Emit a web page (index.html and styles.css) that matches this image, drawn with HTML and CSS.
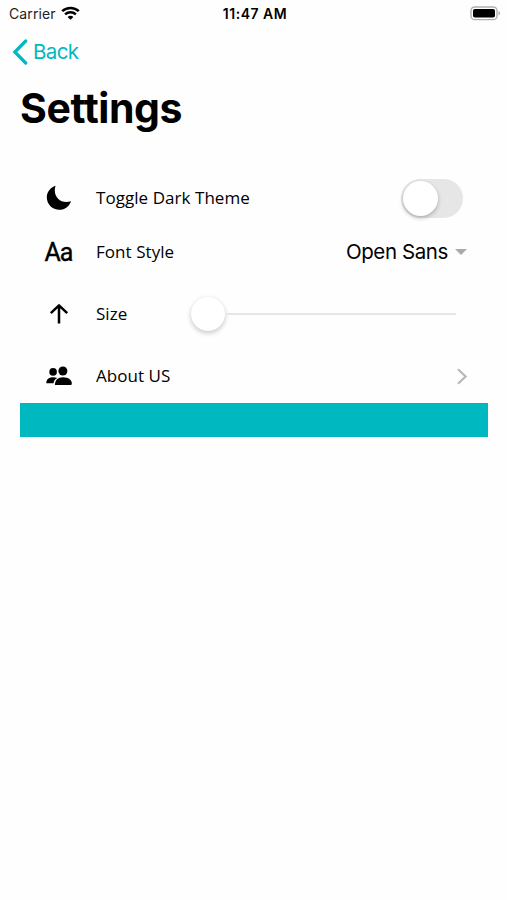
FILE: index.html
```html
<!DOCTYPE html>
<html lang="en">
<head>
    <meta charset="UTF-8">
    <meta name="viewport" content="width=device-width, initial-scale=1.0">
    <title>Settings</title>
    <link rel="stylesheet" href="styles.css">
</head>
<body>
    <div class="status-bar">
        <div class="carrier">
            <span>Carrier</span>
            <svg class="wifi" width="19" height="14" viewBox="0 0 19 14" fill="none" stroke="#000" stroke-width="2.5">
                <path d="M1.2 5.2C5.8 .8 13.2 .8 17.8 5.2"/>
                <path d="M4.1 8.4C7.1 5.6 11.9 5.6 14.9 8.4"/>
                <path d="M9.5 13.8L6.6 10.9C8.2 9.5 10.8 9.5 12.4 10.9Z" fill="#000" stroke="none"/>
            </svg>
        </div>
        <div class="time">11:47 AM</div>
        <div class="battery-wrap">
            <svg class="battery" width="31" height="15" viewBox="0 0 31 15">
                <rect x="1" y="1" width="26" height="12.6" rx="3.6" fill="#fff" stroke="#b0b0b0" stroke-width="1.4"/>
                <rect x="3" y="3" width="22" height="8.6" rx="1.8" fill="#000"/>
                <path d="M28.5 5.1C30.6 5.8 30.6 8.8 28.5 9.5Z" fill="#b0b0b0"/>
            </svg>
        </div>
    </div>

    <div class="nav-bar">
        <a class="back-link" href="#">
            <svg width="16" height="26" viewBox="0 0 16 26" fill="none" stroke="currentColor" stroke-width="3.2" stroke-linecap="round">
                <path d="M13.7 2L2.8 13L13.7 24"/>
            </svg>
            <span>Back</span>
        </a>
    </div>

    <h1 class="page-title">Settings</h1>

    <div class="settings-list">
        <div class="row">
            <div class="row-icon">
                <svg width="26" height="26" viewBox="0 0 26 26">
                    <path d="M9.6 .8C4.4 2.6 .8 7 .8 12.2C.8 19.2 6.4 24.8 13.4 24.8C18.8 24.8 23.4 21.4 25 16.2C23.4 16.8 22 17 20.4 17C13.8 17 8.8 12 8.8 5.4C8.8 3.8 9 2.3 9.6 .8Z"/>
                </svg>
            </div>
            <div class="row-label">Toggle Dark Theme</div>
            <div class="switch"><div class="switch-thumb"></div></div>
        </div>

        <div class="row">
            <div class="row-icon font-icon">Aa</div>
            <div class="row-label">Font Style</div>
            <div class="dropdown">
                <span>Open Sans</span>
                <div class="caret"></div>
            </div>
        </div>

        <div class="row size-row">
            <div class="row-icon">
                <svg width="20" height="22" viewBox="0 0 20 22" fill="none" stroke="#000" stroke-width="2.5">
                    <path d="M10 20.4V3.2M1.8 10.2L10 2.4L18.2 10.2" stroke-linejoin="round"/>
                </svg>
            </div>
            <div class="row-label">Size</div>
            <div class="slider">
                <div class="slider-thumb"></div>
                <div class="slider-track"></div>
            </div>
        </div>

        <div class="row">
            <div class="row-icon">
                <svg width="26" height="20" viewBox="0 0 26 20">
                    <circle cx="7.1" cy="5.9" r="3.8"/>
                    <path d="M.3 17.3C.3 13.2 3 11.2 7 11.2C8.6 11.2 10 11.4 11.2 12C8.9 13.2 7.8 14.8 7.6 17.3Z"/>
                    <circle cx="16.9" cy="5" r="4.5"/>
                    <path d="M8.9 19C8.9 14 11.8 11.2 17.1 11.2C22.4 11.2 25.8 14 25.8 17.2C25.8 18.5 25.3 19 24.3 19Z"/>
                </svg>
            </div>
            <div class="row-label">About US</div>
            <svg class="chevron" width="12" height="17" viewBox="0 0 12 17" fill="none" stroke="#b8b8b8" stroke-width="2.2">
                <path d="M2 1.2L9.6 8.5L2 15.8"/>
            </svg>
        </div>
    </div>

    <div class="banner"></div>
</body>
</html>
```
FILE: styles.css
```css
:root {
    --accent: #00b8bf;
    --text: #000;
    --track: #e6e6e6;
}

* {
    margin: 0;
    padding: 0;
    box-sizing: border-box;
}

body {
    background-color: #fefefe;
    color: var(--text);
    font-family: 'Inter', sans-serif;
}

.status-bar {
    display: grid;
    grid-template-columns: 1fr auto 1fr;
    align-items: center;
    height: 27px;
    padding: 0 6px 0 9px;
}

.carrier {
    display: flex;
    align-items: center;
    gap: 5px;
    font-size: 14px;
    letter-spacing: 0.1px;
    color: #222;
}

.wifi {
    margin-bottom: 2px;
}

.time {
    font-size: 14px;
    font-weight: 600;
    letter-spacing: 0.5px;
}

.battery-wrap {
    display: flex;
    justify-content: flex-end;
}

.nav-bar {
    display: flex;
    align-items: center;
    height: 50px;
    padding-left: 12px;
}

.back-link {
    display: flex;
    align-items: center;
    gap: 5px;
    color: var(--accent);
    font-size: 20.5px;
    letter-spacing: -0.6px;
    text-decoration: none;
}

.back-link span {
    padding-bottom: 2px;
}

.page-title {
    height: 94px;
    padding-left: 20px;
    font-size: 41px;
    font-weight: 700;
    letter-spacing: -0.4px;
    line-height: 63px;
}

.settings-list {
    padding: 0 39px 0 40px;
}

.row {
    display: flex;
    align-items: center;
    height: 54px;
}

.size-row {
    height: 70px;
}

.row-icon {
    display: flex;
    justify-content: center;
    width: 37px;
    margin-right: 19px;
}

.font-icon {
    font-family: Roboto, sans-serif;
    font-size: 25px;
    font-weight: 400;
    letter-spacing: -1px;
    -webkit-text-stroke: 0.4px #000;
}

.row-label {
    flex: 1;
    padding-bottom: 2px;
    font-family: 'Open Sans', sans-serif;
    font-size: 17px;
    letter-spacing: 0.05px;
}

.switch {
    width: 62px;
    height: 39px;
    margin-right: 5px;
    padding: 2px;
    border-radius: 20px;
    background-color: var(--track);
}

.switch-thumb {
    width: 35px;
    height: 35px;
    border-radius: 50%;
    background-color: #fff;
    box-shadow: 0 2px 4px rgba(0, 0, 0, 0.25);
}

.dropdown {
    display: flex;
    align-items: center;
    gap: 7px;
    margin-right: 1px;
    font-size: 20.5px;
    letter-spacing: -0.4px;
}

.dropdown span {
    padding-bottom: 2px;
}

.caret {
    border: 6px solid transparent;
    border-top-color: #aaa;
    border-bottom: none;
}

.slider {
    display: flex;
    align-items: center;
    width: 265px;
    margin-right: 12px;
}

.slider-thumb {
    width: 34px;
    height: 34px;
    border-radius: 50%;
    background-color: #fff;
    box-shadow: 0 2px 5px rgba(0, 0, 0, 0.23);
}

.slider-track {
    flex: 1;
    height: 2px;
    background-color: var(--track);
}

.banner {
    height: 34px;
    margin: 0 19px 0 20px;
    background-color: var(--accent);
}
```
